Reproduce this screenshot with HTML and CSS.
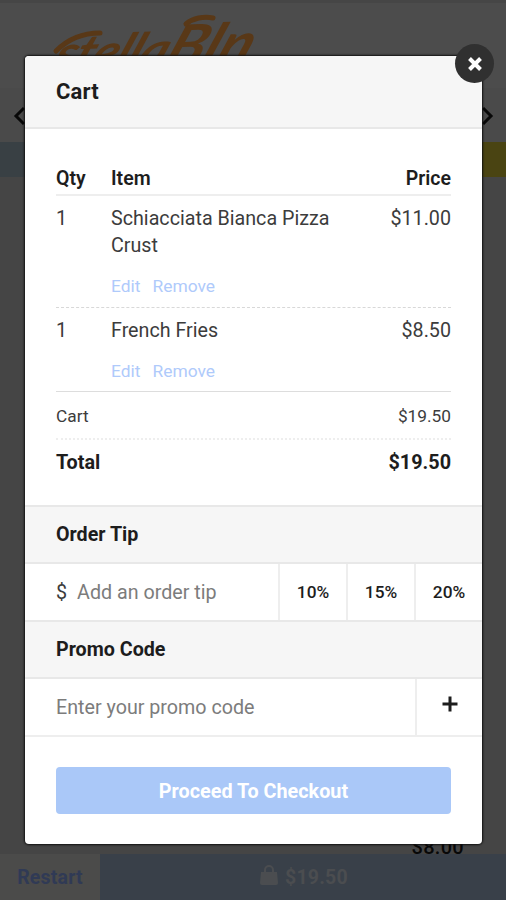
FILE: index.html
```html
<!DOCTYPE html>
<html lang="en">
<head>
<meta charset="utf-8">
<title>Cart</title>
<link rel="stylesheet" href="styles.css">
</head>
<body>
<div class="page">
  <header class="brand">
    <span class="logo"><span class="w1">stella</span><span class="w2">Bln</span></span>
    <svg class="swash" width="220" height="60" viewBox="0 0 220 60"><path d="M6 43C18 31 34 25 50 25M136 16c7-6 18-8 27-6"/></svg>
  </header>
  <nav class="tabs">
    <svg width="12" height="20" viewBox="0 0 12 20"><path d="M11 2 3 10l8 8"/></svg>
    <svg width="12" height="20" viewBox="0 0 12 20"><path d="M1 2l8 8-8 8"/></svg>
  </nav>
  <div class="hero"></div>
  <main class="products"><span class="product-price">$8.00</span></main>
  <footer class="bar">
    <div class="restart">Restart</div>
    <div class="bag">
      <svg width="18" height="20" viewBox="0 0 18 20"><path class="bag-body" d="M1 7h16l1 11q0 2-2 2H2q-2 0-2-2z"/><path class="bag-handle" d="M5 9V5a4 4 0 0 1 8 0v4"/></svg>
      <span>$19.50</span>
    </div>
  </footer>
</div>

<section class="modal">
  <button class="close" aria-label="Close"><svg width="18" height="18" viewBox="0 0 18 18"><path d="M3.500 3.500l11 11M14.500 3.500l-11 11"/></svg></button>
  <h1 class="modal-head"><span>Cart</span></h1>
  <div class="cart">
    <div class="row labels"><span>Qty</span><span>Item</span><span class="price">Price</span></div>
    <div class="row item">
      <span class="qty">1</span>
      <div><div class="name">Schiacciata Bianca Pizza<br>Crust</div><div class="actions"><a>Edit</a><a>Remove</a></div></div>
      <span class="price">$11.00</span>
    </div>
    <div class="row item last">
      <span class="qty">1</span>
      <div><div class="name">French Fries</div><div class="actions"><a>Edit</a><a>Remove</a></div></div>
      <span class="price">$8.50</span>
    </div>
    <div class="sum"><span>Cart</span><span>$19.50</span></div>
    <div class="total"><span>Total</span><span class="amount">$19.50</span></div>
  </div>
  <h2 class="section tip-head"><span>Order Tip</span></h2>
  <div class="tip">
    <div class="field"><span class="dollar">$</span><span class="hint">Add an order tip</span></div>
    <div class="pct">10%</div><div class="pct">15%</div><div class="pct">20%</div>
  </div>
  <h2 class="section promo-head"><span>Promo Code</span></h2>
  <div class="promo">
    <div class="field"><span class="hint">Enter your promo code</span></div>
    <div class="add"><svg width="16" height="16" viewBox="0 0 16 16"><path d="M8 .5v15M.5 8h15"/></svg></div>
  </div>
  <div class="foot"><button class="checkout"><span>Proceed To Checkout</span></button></div>
</section>
</body>
</html>
```
FILE: styles.css
```css
* { box-sizing: border-box; }
body { margin: 0; width: 506px; height: 900px; overflow: hidden; position: relative; font-family: Roboto, "Liberation Sans", sans-serif; color: #1d1d1d; background: #454545; }
h1, h2 { margin: 0; }
svg { display: block; fill: none; stroke: currentColor; }
.page { height: 900px; display: flex; flex-direction: column; }
.brand { position: relative; height: 88px; border-top: 3px solid #464646; background: #4c4c4c; padding: 7px 0 0 60px; color: #593817; }
.logo { display: flex; align-items: flex-start; width: max-content; font-family: Lato, sans-serif; font-style: italic; font-weight: 700; line-height: 60px; transform: skewX(-24deg) rotate(-2deg) scaleX(1.08); transform-origin: 0 50%; }
.w1 { font-size: 48px; padding-top: 12px; letter-spacing: -1px; }
.w2 { font-size: 56px; padding-top: 8px; }
.swash { position: absolute; left: 50px; top: 5px; stroke-width: 5; stroke-linecap: round; }
.tabs { height: 54px; background: #4a4a4a; display: flex; justify-content: space-between; padding: 18px 12px 0 13px; color: #080808; }
.tabs svg { stroke-width: 3; }
.hero { height: 35px; background: linear-gradient(90deg, #394044 0 50%, #4a4412 50%); }
.products { flex: 1; display: flex; justify-content: flex-end; align-items: flex-end; padding: 0 42px 0 0; }
.product-price { font-size: 20px; font-weight: 500; line-height: 24px; letter-spacing: .3px; color: #080808; margin-bottom: -5px; }
.bar { height: 46px; display: flex; font-size: 19.5px; font-weight: 700; line-height: 48px; letter-spacing: .2px; position: relative; }
.restart { width: 100px; background: #4b4b4a; color: #303a55; text-align: center; }
.bag { flex: 1; background: #394049; color: #4b4d50; display: flex; justify-content: center; gap: 7px; padding-left: 2px; }
.bag svg { margin-top: 11px; }
.bag-body { fill: currentColor; stroke: none; }
.bag-handle { stroke-width: 2; }

.modal { position: absolute; left: 25px; top: 56px; width: 457px; height: 788px; background: #fff; border-radius: 4px; box-shadow: 0 0 2px 1px #111; }
.close { position: absolute; right: -12px; top: -12px; width: 39px; height: 39px; padding: 0; border: 0; border-radius: 50%; background: #303030; color: #fff; display: grid; place-items: center; }
.close svg { stroke-width: 4; }
.modal-head { height: 73px; border-bottom: 2px solid #e8e8e8; background: #f6f6f6; border-radius: 4px 4px 0 0; padding: 0 31px; font-size: 22px; font-weight: 700; line-height: 72px; letter-spacing: .2px; }
.cart { padding: 33px 31px 0; height: 377px; font-size: 19.7px; }
.row { display: grid; grid-template-columns: 55px 1fr auto; }
.labels { height: 34px; line-height: 33px; font-size: 19.5px; font-weight: 600; border-bottom: 2px solid #eee; }
.item { font-weight: 400; line-height: 27px; padding-top: 9px; height: 112px; border-bottom: 1px dashed #d8d8d8; }
.item.last { height: 84px; border-bottom: 1px solid #ddd; }
.item, .sum, .field { color: #3c3c3c; }
.actions { display: flex; gap: 12px; margin-top: 14px; font-size: 17.4px; color: #afcafb; }
.sum { display: flex; justify-content: space-between; height: 48px; line-height: 49px; font-size: 17.3px; border-bottom: 2px dotted #eee; }
.total { display: flex; justify-content: space-between; line-height: 45px; font-size: 19.8px; font-weight: 700; }
.section { background: #f6f6f6; border: solid #e8e8e8; border-width: 2px 0; padding: 0 31px; height: 59px; font-size: 19.7px; font-weight: 700; line-height: 55px; }
.promo-head { line-height: 56px; }
.tip { height: 56px; display: flex; }
.tip-head { margin-top: -1px; }
.field { flex: 1; padding-left: 31px; display: flex; align-items: center; gap: 10px; font-size: 19.7px; }
.hint { color: #7c7c7c; }
.pct { width: 68px; border-left: 2px solid #eee; font-size: 17.3px; font-weight: 500; line-height: 57px; text-align: center; }
.promo { height: 58px; display: flex; border-bottom: 2px solid #eee; }
.add { width: 67px; border-left: 2px solid #eee; display: flex; justify-content: center; padding-top: 17px; }
.add svg { stroke-width: 3; }
.foot { padding: 30px 31px; }
.checkout { display: block; width: 100%; height: 47px; border: 0; border-radius: 4px; background: #aac8f8; color: #fff; font: 700 19.8px/49px Roboto, sans-serif; padding: 0; }
```
